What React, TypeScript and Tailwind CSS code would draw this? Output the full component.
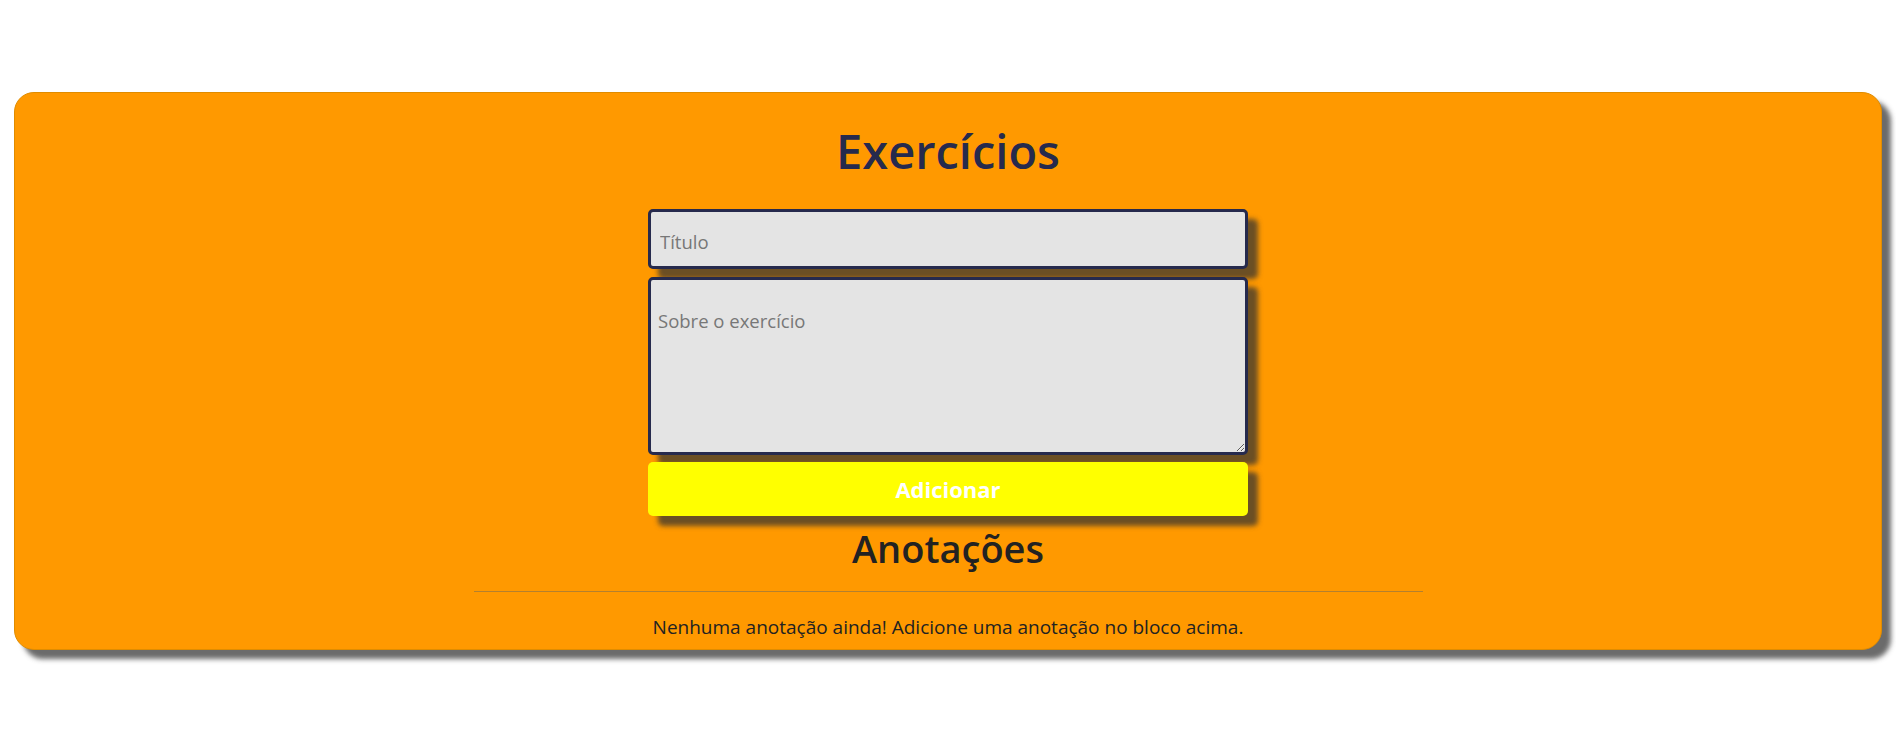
import React from "react";

export default function App() {
  return (
    <div className="min-h-[741px] bg-white pt-[92px] pb-[40px]" style={{ fontFamily: '"Open Sans", "Noto Sans", sans-serif' }}>
      <div className="mx-[14px] rounded-[20px] border border-[#e08c00] bg-[#ff9900] pt-[28px] pb-[9px] shadow-[9px_9px_5px_rgba(50,50,50,0.72)]">
        <h1 className="text-center text-[47px] leading-[60px] font-semibold text-[#262a4d]">Exercícios</h1>
        <div className="mx-auto mt-[28px] flex w-[600px] flex-col">
          <input
            type="text"
            placeholder="Título"
            className="h-[60px] w-full rounded-[5px] border-[3px] border-[#262a4d] bg-[#e4e4e4] pl-[9px] pt-[5px] text-[18.5px] text-[#222] placeholder:text-[#777] shadow-[10px_10px_5px_rgba(50,50,50,0.72)] outline-none"
          />
          <textarea
            placeholder="Sobre o exercício"
            className="mt-[8px] h-[178px] w-full rounded-[5px] border-[3px] border-[#262a4d] bg-[#e4e4e4] px-[7px] pt-[27px] text-[18.5px] text-[#222] placeholder:text-[#777] shadow-[10px_10px_5px_rgba(50,50,50,0.72)] outline-none"
          />
          <button className="mt-[7px] h-[54px] w-full rounded-[5px] bg-[#ffff00] text-[22px] font-bold text-white shadow-[10px_10px_5px_rgba(50,50,50,0.72)]">
            Adicionar
          </button>
        </div>
        <h2 className="mt-[9px] text-center text-[38px] leading-[46px] font-semibold text-[#222]">Anotações</h2>
        <hr className="mx-auto mt-[20px] w-[949px] border-t border-[#b3802f]" />
        <p className="mt-[22px] text-center text-[19px] leading-[26px] text-[#222]">
          Nenhuma anotação ainda! Adicione uma anotação no bloco acima.
        </p>
      </div>
    </div>
  );
}
